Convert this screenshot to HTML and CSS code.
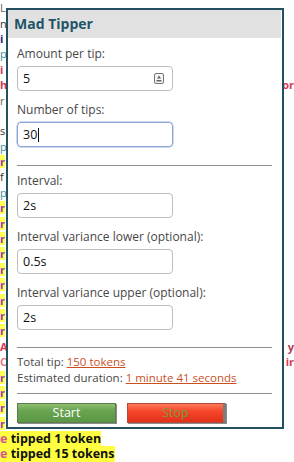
FILE: index.html
```html
<!DOCTYPE html>
<html>
<head>
<meta charset="utf-8">
<link rel="stylesheet" href="styles.css">
</head>
<body>
<div class="chat">
  <div class="line"><span class="frag grey">L</span></div>
  <div class="line"><span class="frag dark">n</span></div>
  <div class="line"><span class="frag navy">i</span></div>
  <div class="line"><span class="frag teal">p</span></div>
  <div class="line"><span class="frag red">i</span></div>
  <div class="line"><span class="frag red">h</span><span class="frag red">or</span></div>
  <div class="line"><span class="frag grey">r</span></div>
  <div class="line"></div>
  <div class="line"><span class="frag dark">s</span></div>
  <div class="line"><span class="frag teal">p</span></div>
  <div class="line"><span class="frag hl">r</span></div>
  <div class="line"><span class="frag dark">f</span></div>
  <div class="line"><span class="frag teal">p</span></div>
  <div class="line"><span class="frag hl">r</span></div>
  <div class="line"><span class="frag hl">r</span></div>
  <div class="line"><span class="frag hl">r</span></div>
  <div class="line"><span class="frag hl">r</span></div>
  <div class="line"><span class="frag hl">r</span></div>
  <div class="line"><span class="frag hl">r</span></div>
  <div class="line"><span class="frag hl">r</span></div>
  <div class="line"><span class="frag hl">r</span></div>
  <div class="line"><span class="frag hl">r</span></div>
  <div class="line"><span class="frag red">A</span><span class="frag wine">y</span></div>
  <div class="line"><span class="frag pink">C</span><span class="frag red">ir</span></div>
  <div class="line"><span class="frag hl">r</span></div>
  <div class="line"><span class="frag hl">r</span></div>
  <div class="line"><span class="frag hl">r</span></div>
  <div class="line"><span class="frag hl">r</span></div>
  <div class="line"><span class="tip"><span class="user">e</span> tipped 1 token</span></div>
  <div class="line"><span class="tip"><span class="user">e</span> tipped 15 tokens</span></div>
</div>

<div class="dialog">
  <div class="titlebar">Mad Tipper</div>
  <div class="content">
    <div class="group">
      <div class="label">Amount per tip:</div>
      <div class="field">
        <span>5</span>
        <svg class="spin" width="10" height="11" viewBox="0 0 10 11">
          <rect x="0.5" y="0.5" width="9" height="10" rx="1.5" fill="#f4f4f4" stroke="#777"/>
          <path d="M5 2.5 L7 5.5 L3 5.5 Z" fill="#666"/>
          <rect x="2.5" y="7" width="5" height="1.5" fill="#666"/>
        </svg>
      </div>
    </div>
    <div class="group">
      <div class="label">Number of tips:</div>
      <div class="field focused"><span>30</span><span class="caret"></span></div>
    </div>
    <div class="rule first"></div>
    <div class="group">
      <div class="label">Interval:</div>
      <div class="field"><span>2s</span></div>
    </div>
    <div class="group">
      <div class="label">Interval variance lower (optional):</div>
      <div class="field"><span>0.5s</span></div>
    </div>
    <div class="group last">
      <div class="label">Interval variance upper (optional):</div>
      <div class="field"><span>2s</span></div>
    </div>
    <div class="rule second"></div>
    <div class="summary">
      <div class="info">Total tip: <a class="link">150 tokens</a></div>
      <div class="info">Estimated duration: <a class="link">1 minute 41 seconds</a></div>
    </div>
    <div class="rule third"></div>
    <div class="buttons">
      <div class="btn start">Start</div>
      <div class="btn stop">Stop</div>
    </div>
  </div>
</div>
</body>
</html>
```
FILE: styles.css
```css
html, body {
  margin: 0;
  padding: 0;
  background: #ffffff;
  overflow: hidden;
  width: 294px;
  height: 462px;
}

body {
  position: relative;
  font-family: "Open Sans", "Noto Sans", sans-serif;
}

.chat {
  display: flex;
  flex-direction: column;
}

.line {
  height: 15.4px;
  line-height: 15.4px;
  display: flex;
  justify-content: space-between;
  align-items: center;
  font-size: 12.5px;
  font-weight: bold;
  white-space: nowrap;
}

.frag { font-size: 11px; line-height: 13px; }
.grey { color: #666; font-weight: normal; }
.dark { color: #333; font-weight: normal; }
.navy { color: #1d2a7a; }
.teal { color: #3d8f9e; font-weight: normal; }
.red { color: #d83a55; }
.pink { color: #e37a86; }
.wine { color: #b0405a; }
.hl { background: #ffff55; color: #9b3bb5; }

.tip {
  background: #ffff40;
  color: #111;
  font-size: 12.5px;
  font-weight: bold;
}
.user { color: #d5558b; }

.dialog {
  position: absolute;
  left: 6px;
  top: 8px;
  width: 274px;
  height: 417px;
  border: 2px solid #234f5e;
  background: #ffffff;
  display: flex;
  flex-direction: column;
}

.titlebar {
  height: 28px;
  line-height: 28px;
  background: #e1e1e1;
  color: #215466;
  font-weight: bold;
  font-size: 14px;
  padding-left: 6px;
  margin-right: 1px;
}

.content {
  padding: 8px 10px 0 9px;
  display: flex;
  flex-direction: column;
}

.group {
  display: flex;
  flex-direction: column;
  margin-bottom: 11px;
}
.group.last { margin-bottom: 0; }

.label {
  font-size: 12px;
  color: #474747;
  height: 16px;
  line-height: 16px;
  margin-bottom: 4px;
  white-space: nowrap;
}

.field {
  height: 23px;
  border: 1px solid #bdbdbd;
  border-radius: 4px;
  display: flex;
  align-items: center;
  justify-content: space-between;
  padding: 0 8px 0 5px;
  box-sizing: content-box;
  font-size: 12.5px;
  color: #111;
  width: 141px;
}

.field.focused {
  border-color: #8ea4d6;
  box-shadow: 0 0 0 0.5px #9fb2e0;
  justify-content: flex-start;
}

.caret {
  display: inline-block;
  width: 1px;
  height: 14px;
  background: #111;
  margin-left: 1px;
}

.spin { display: block; }

.rule {
  height: 1px;
  background: #8f8f8f;
}
.rule.first { margin: 7px 0 7px; }
.rule.second { margin: 17px 0 6px; }
.rule.third { margin: 7px 0 9px; }

.summary {
  display: flex;
  flex-direction: column;
}

.info {
  font-size: 11.5px;
  color: #474747;
  height: 16px;
  line-height: 16px;
  white-space: nowrap;
}

.link {
  color: #c9501f;
  text-decoration: underline;
}

.buttons {
  display: flex;
  gap: 11px;
}

.btn {
  width: 97px;
  height: 18px;
  line-height: 18px;
  text-align: center;
  font-size: 12.5px;
  border: 1px solid #5a6b55;
  box-shadow: 1px 1px 0 #8d8d8d;
}

.start {
  background: linear-gradient(#8dc071 0%, #6aa552 35%, #5b9644 100%);
  color: #ffffff;
  border-color: #5b7d4d;
}

.stop {
  background: linear-gradient(#ff7a5c 0%, #f5462a 40%, #e2301a 100%);
  color: #7a9a3c;
  border-color: #b34a3a;
  border-right: 3px solid #7d7d7d;
  width: 95px;
}
```
